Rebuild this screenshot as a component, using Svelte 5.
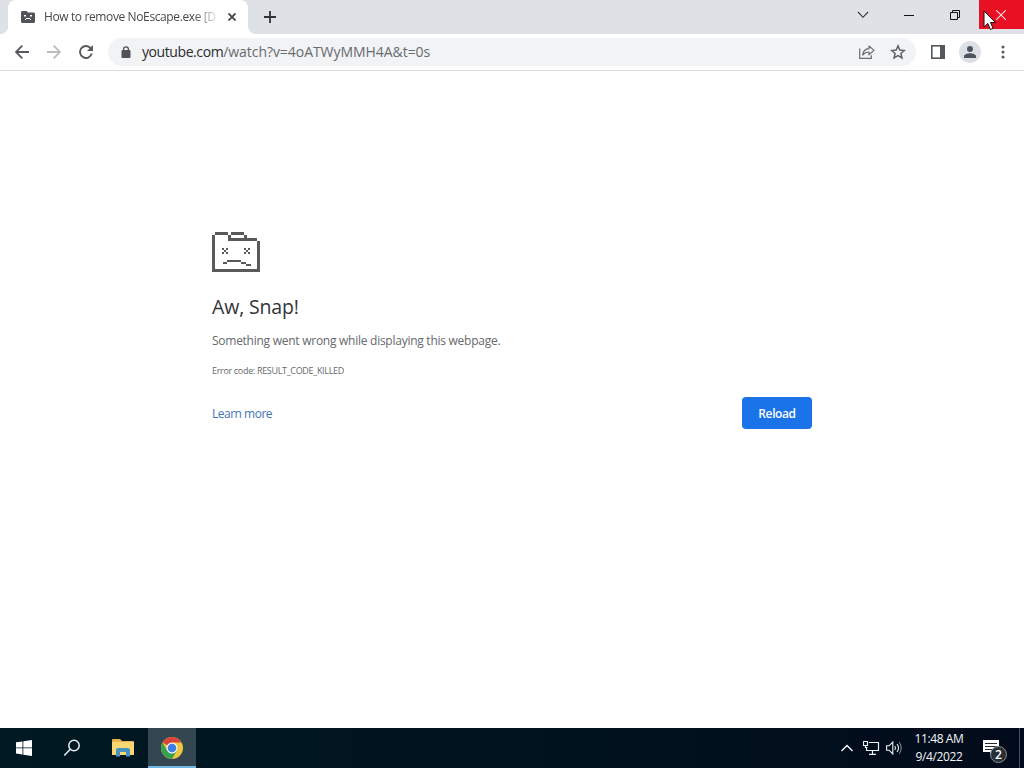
<script lang="ts">
  let url = $state({ host: "youtube.com", path: "/watch?v=4oATWyMMH4A&t=0s" });
  let clock = $state({ time: "11:48 AM", date: "9/4/2022" });
  let notifications = $state(2);
</script>

<div class="desktop">
  <div class="browser">
    <header class="tab-strip">
      <div class="tab">
        <svg class="favicon" width="14" height="12" viewBox="0 0 14 12">
          <path d="M1 0h4.5l1.5 1.5h6l1 1V11l-1 1H1l-1-1V1z" fill="#505357" />
          <path d="M3 4h2v1.5H3zM9 4h2v1.5H9zM4 9V8h1V7h4v1h1v1H9V8H5v1z" fill="#fff" />
        </svg>
        <span class="tab-title">How to remove NoEscape.exe [D</span>
        <button class="tab-close" type="button" aria-label="Close tab">
          <svg width="8" height="8" viewBox="0 0 8 8">
            <path d="M.5.5l7 7M7.5.5l-7 7" stroke="#3c4043" stroke-width="1.7" />
          </svg>
        </button>
        <svg class="curve" width="8" height="8" viewBox="0 0 8 8">
          <path d="M0 0a8 8 0 0 0 8 8H0z" fill="#fff" />
        </svg>
      </div>
      <button class="new-tab" type="button" aria-label="New tab">
        <svg width="12" height="12" viewBox="0 0 12 12">
          <path d="M6 0v12M0 6h12" stroke="#303236" stroke-width="1.8" />
        </svg>
      </button>
      <div class="window-controls">
        <button type="button" aria-label="Search tabs">
          <svg width="12" height="8" viewBox="0 0 12 8">
            <path d="M1 1l5 5.3L11 1" fill="none" stroke="#333" stroke-width="1.1" />
          </svg>
        </button>
        <button type="button" aria-label="Minimize">
          <svg width="10" height="10" viewBox="0 0 10 10">
            <path d="M0 5.5h10" stroke="#111" />
          </svg>
        </button>
        <button type="button" aria-label="Restore">
          <svg width="10" height="10" viewBox="0 0 10 10">
            <path d="M.5 2.5h7v7h-7zM2.5 2.5v-2h7v7h-2" fill="none" stroke="#111" />
          </svg>
        </button>
        <button class="close" type="button" aria-label="Close">
          <svg width="10" height="10" viewBox="0 0 10 10">
            <path d="M0 0l10 10M10 0L0 10" stroke="#ffd9dc" stroke-width="1.1" />
          </svg>
        </button>
      </div>
    </header>

    <div class="toolbar">
      <button class="tool" type="button" aria-label="Back">
        <svg width="14" height="14" viewBox="0 0 14 14">
          <path d="M14 7H1.5M7.3.7L1 7l6.3 6.3" fill="none" stroke="#55585c" stroke-width="1.8" />
        </svg>
      </button>
      <button class="tool" type="button" aria-label="Forward">
        <svg width="14" height="14" viewBox="0 0 14 14">
          <path d="M0 7h12.5M6.7.7L13 7l-6.3 6.3" fill="none" stroke="#babcbe" stroke-width="1.8" />
        </svg>
      </button>
      <button class="tool" type="button" aria-label="Reload page">
        <svg width="14" height="14" viewBox="0 0 14 14">
          <path d="M12 3.6A6 6 0 1 0 12.8 8.6" fill="none" stroke="#55585c" stroke-width="1.9" />
          <path d="M14 0v6H8z" fill="#55585c" />
        </svg>
      </button>

      <div class="omnibox">
        <svg class="lock" width="10" height="12" viewBox="0 0 10 12">
          <path d="M2.6 5V3.3a2.4 2.4 0 0 1 4.8 0V5" fill="none" stroke="#505357" stroke-width="1.3" />
          <rect x="0.5" y="4" width="9" height="8" rx="1" fill="#505357" />
        </svg>
        <span class="url"><b>{url.host}</b>{url.path}</span>
        <svg class="share" width="16" height="14" viewBox="0 0 16 14">
          <path d="M.7 3.5v9.8h11.6v-3" fill="none" stroke="#6a6d71" stroke-width="1.2" />
          <path d="M3.7 10C4 6.3 6.3 4 10 3.7V1l5 4.4-5 4.4V7C7.2 7 5.4 8 3.7 10z" fill="none" stroke="#6a6d71" stroke-width="1.2" stroke-linejoin="round" />
        </svg>
        <svg width="16" height="16" viewBox="0 0 16 16">
          <path d="M8 1.9l1.8 4.2 4.6.4-3.5 3 1.1 4.5L8 11.6 4 14l1.1-4.5-3.5-3 4.6-.4z" fill="none" stroke="#5f6368" stroke-width="1.5" />
        </svg>
      </div>

      <button class="tool" type="button" aria-label="Side panel">
        <svg width="14" height="14" viewBox="0 0 14 14">
          <rect x="0.8" y="0.8" width="12.4" height="12.4" fill="none" stroke="#55585c" stroke-width="1.6" />
          <path d="M9 1h5v12H9z" fill="#55585c" />
        </svg>
      </button>
      <button class="tool profile" type="button" aria-label="Profile">
        <svg width="12" height="12" viewBox="0 0 12 12">
          <circle cx="6" cy="3" r="3" fill="#4c5561" />
          <path d="M0 12v-1.7C0 8.2 3.5 7.3 6 7.3s6 .9 6 3V12z" fill="#4c5561" />
        </svg>
      </button>
      <button class="tool" type="button" aria-label="Menu">
        <svg width="5" height="14" viewBox="0 0 5 14">
          <g fill="#55585c">
            <circle cx="3" cy="2" r="1.5" />
            <circle cx="3" cy="7" r="1.5" />
            <circle cx="3" cy="12" r="1.5" />
          </g>
        </svg>
      </button>
    </div>

    <main class="page">
      <div class="error">
        <svg class="sad-folder" width="48" height="40" viewBox="0 0 48 40" shape-rendering="crispEdges">
          <path
            d="M3 0h13v3H3zM0 3h3v37H0zM16 3h3v3h-3zM19 0h13v3H19zM32 3h3v3h-3zM16 6h29v3H16zM45 9h3v31h-3zM3 37h42v3H3z"
            fill="#5a5a5a"
          />
          <path
            d="M10 16h2v2h-2zM14 16h2v2h-2zM12 18h2v2h-2zM10 20h2v2h-2zM14 20h2v2h-2zM32 16h2v2h-2zM36 16h2v2h-2zM34 18h2v2h-2zM32 20h2v2h-2zM36 20h2v2h-2zM11 30h4v2h-4zM15 28h14v2H15zM29 30h5v2h-5zM34 32h5v2h-5z"
            fill="#5a5a5a"
          />
        </svg>
        <h1>Aw, Snap!</h1>
        <p class="message">Something went wrong while displaying this webpage.</p>
        <p class="code">Error code: RESULT_CODE_KILLED</p>
        <div class="actions">
          <span class="learn">Learn more</span>
          <button class="reload" type="button">Reload</button>
        </div>
      </div>
    </main>
  </div>

  <footer class="taskbar">
    <div class="task">
      <svg width="16" height="16" viewBox="0 0 16 16">
        <path d="M0 2.3l6.5-.9v6.1H0zM7.3 1.3L16 0v7.5H7.3zM0 8.3h6.5v6.2L0 13.6zM7.3 8.3H16V16l-8.7-1.3z" fill="#fff" />
      </svg>
    </div>
    <div class="task">
      <svg width="18" height="18" viewBox="0 0 18 18">
        <circle cx="11" cy="6.5" r="5.2" fill="none" stroke="#e8edf0" stroke-width="1.5" />
        <path d="M7.2 10.3L1.3 16.5" stroke="#e8edf0" stroke-width="1.6" />
      </svg>
    </div>
    <div class="task explorer">
      <svg width="22" height="18" viewBox="0 0 22 18">
        <path d="M0 1q0-1 1-1h7l2 2h11q1 0 1 1v13H0z" fill="#e8b34b" />
        <path d="M0 3h22v13H0z" fill="#fbd673" />
        <path d="M4 17.5V11q0-2 2-2h10q2 0 2 2v6.500h-4V13H8v4.500z" fill="#4593be" />
      </svg>
    </div>
    <div class="task active">
      <svg width="22" height="22" viewBox="0 0 22 22">
        <circle cx="11" cy="11" r="11" fill="#efc63f" />
        <path d="M11 11L1.500 5.500A11 11 0 0 1 20.500 5.500H11z" fill="#d84437" />
        <path d="M1.500 5.500A11 11 0 0 0 11 22l4.800-8.200L11 11 6.200 13.800z" fill="#35a050" />
        <circle cx="11" cy="11" r="5.5" fill="#f2f5f7" />
        <circle cx="11" cy="11" r="4.3" fill="#3c7de6" />
      </svg>
    </div>
    <div class="tray">
      <svg class="chevron" width="12" height="8" viewBox="0 0 12 8">
        <path d="M.5 7L6 1.500 11.500 7" fill="none" stroke="#fff" stroke-width="1.3" />
      </svg>
      <svg class="network" width="17" height="14" viewBox="0 0 17 14">
        <path d="M6 1.5h9.500v8h-12V6M9.500 9.500v3.500M6 13.300h7M.5.5h4v4h-4zM2.500 4.500v2h2" fill="none" stroke="#eef1f3" stroke-width="1.2" />
      </svg>
      <svg class="volume" width="17" height="14" viewBox="0 0 17 14">
        <path d="M.6 4.800h2.500L6.800 1v12L3.100 9.200H.6z" fill="none" stroke="#eef1f3" stroke-width="1.1" />
        <path d="M8.800 5q1.500 2 0 4M11 3q3 4 0 8" fill="none" stroke="#eef1f3" stroke-width="1.1" />
        <path d="M13.200 1.200q4 5.800 0 11.600" fill="none" stroke="#7d858c" stroke-width="1.1" />
      </svg>
      <div class="clock">
        <span class="time">{clock.time}</span>
        <span class="date">{clock.date}</span>
      </div>
      <div class="action-center">
        <svg width="16" height="16" viewBox="0 0 16 16">
          <path d="M0 0h16v12h-6l-3 3v-3H0z" fill="#fff" />
          <path d="M2 3.500h12M2 6.500h12M2 9.500h8" stroke="#202835" />
        </svg>
        <span class="badge">{notifications}</span>
      </div>
      <div class="show-desktop"></div>
    </div>
  </footer>

  <svg class="cursor" width="14" height="21" viewBox="0 0 14 21">
    <path d="M1 1v16l3.800-3.500 2.700 6 2.600-1.200-2.600-5.800h5z" fill="#fff" stroke="#111" />
  </svg>
</div>

<style>
  :global(body) {
    margin: 0;
    overflow: hidden;
  }

  .desktop {
    position: relative;
    display: flex;
    flex-direction: column;
    width: 1024px;
    height: 768px;
    overflow: hidden;
    background: #fff;
    font-family: "Open Sans", "Noto Sans", sans-serif;
    white-space: nowrap;
  }

  svg {
    display: block;
    flex-shrink: 0;
  }

  button {
    display: flex;
    align-items: center;
    justify-content: center;
    padding: 0;
    border: 0;
    background: none;
    font-family: inherit;
  }

  .browser {
    display: flex;
    flex: 1;
    flex-direction: column;
    min-height: 0;
  }

  .tab-strip {
    display: flex;
    height: 34px;
    flex-shrink: 0;
    background: #dee1e6;
  }

  .tab {
    position: relative;
    display: flex;
    box-sizing: border-box;
    align-items: center;
    width: 240px;
    margin-left: 8px;
    padding-left: 13px;
    border-radius: 8px 8px 0 0;
    background: #fff;
  }

  .tab::before {
    position: absolute;
    bottom: 0;
    left: -8px;
    width: 8px;
    height: 8px;
    background: radial-gradient(circle at 0 0, transparent 8px, #fff 8.5px);
    content: "";
  }

  .curve {
    position: absolute;
    bottom: 0;
    left: 100%;
  }

  .tab-title {
    width: 174px;
    margin-left: 9px;
    color: #45484c;
    font-size: 12px;
    letter-spacing: -0.38px;
    line-height: 18px;
    mask-image: linear-gradient(to right, #000 150px, transparent 176px);
  }

  .tab-close {
    width: 16px;
    height: 16px;
    margin-left: 6px;
  }

  .new-tab {
    width: 28px;
    margin-left: 8px;
  }

  .window-controls {
    display: flex;
    margin-left: auto;
  }

  .window-controls button {
    box-sizing: border-box;
    width: 46px;
    height: 29px;
    padding-right: 2px;
  }

  .window-controls .close {
    width: 45px;
    background: #e81123;
  }

  .toolbar {
    display: flex;
    box-sizing: border-box;
    align-items: center;
    height: 37px;
    flex-shrink: 0;
    padding: 0 6px;
    border-bottom: 1px solid #d9dbdd;
    background: #fff;
  }

  .tool {
    width: 32px;
    height: 28px;
  }

  .omnibox {
    display: flex;
    box-sizing: border-box;
    align-items: center;
    width: 808px;
    height: 28px;
    margin: 0 6px;
    padding: 0 10px 0 13px;
    border-radius: 14px;
    background: #f1f3f4;
  }

  .url {
    flex: 1;
    margin-left: 11px;
    color: #686b6f;
    font-size: 14px;
    letter-spacing: -0.05px;
    line-height: 20px;
  }

  .url b {
    color: #2a2c2f;
    font-weight: 400;
    letter-spacing: -0.42px;
  }

  .share {
    margin-right: 15px;
  }

  .profile {
    width: 22px;
    height: 22px;
    margin: 0 5px;
    border-radius: 50%;
    background: #dde1e6;
  }

  .page {
    flex: 1;
    padding: 161px 212px 0;
  }

  .error {
    display: flex;
    flex-direction: column;
    width: 600px;
  }

  h1 {
    margin: 22px 0 0;
    color: #333538;
    font-size: 19.5px;
    font-weight: 400;
    letter-spacing: -0.15px;
    line-height: 26px;
  }

  p {
    margin: 0;
    color: #66696d;
  }

  .message {
    margin-top: 11px;
    font-size: 12px;
    letter-spacing: -0.26px;
    line-height: 20px;
  }

  .code {
    margin-top: 13px;
    font-size: 9px;
    letter-spacing: -0.32px;
    line-height: 14px;
  }

  .actions {
    display: flex;
    align-items: center;
    justify-content: space-between;
    margin-top: 19px;
  }

  .learn {
    color: #3f75b5;
    font-size: 12px;
    letter-spacing: -0.5px;
  }

  .reload {
    width: 70px;
    height: 32px;
    border-radius: 4px;
    background: #1a73e8;
    color: #fff;
    font-size: 12px;
    font-weight: 600;
    letter-spacing: -0.4px;
  }

  .taskbar {
    display: flex;
    height: 40px;
    flex-shrink: 0;
    background: linear-gradient(to right, #001923, #00131f 50%, #020b1b);
  }

  .task {
    display: flex;
    box-sizing: border-box;
    align-items: center;
    justify-content: center;
    width: 48px;
  }

  .explorer {
    width: 52px;
    padding-left: 2px;
  }

  .active {
    padding-top: 2px;
    border-bottom: 2px solid #6fb6e2;
    background: #34464f;
  }

  .tray {
    display: flex;
    align-items: center;
    margin-left: auto;
  }

  .network {
    margin-left: 10px;
  }

  .volume {
    margin-left: 6px;
  }

  .clock {
    display: flex;
    flex-direction: column;
    align-items: center;
    width: 72px;
    color: #f3f5f7;
    font-size: 12px;
    letter-spacing: -0.4px;
    line-height: 18px;
  }

  .action-center {
    position: relative;
    width: 16px;
    margin-left: 8px;
  }

  .badge {
    position: absolute;
    top: 6px;
    left: 7px;
    box-sizing: border-box;
    width: 17px;
    height: 17px;
    border: 1px solid #898e92;
    border-radius: 50%;
    background: #292e34;
    color: #fff;
    font-size: 12px;
    font-weight: 600;
    line-height: 15px;
    text-align: center;
  }

  .show-desktop {
    width: 4px;
    height: 40px;
    margin-left: 20px;
    border-left: 1px solid #46505b;
  }

  .cursor {
    position: absolute;
    top: 10px;
    left: 983px;
  }
</style>
